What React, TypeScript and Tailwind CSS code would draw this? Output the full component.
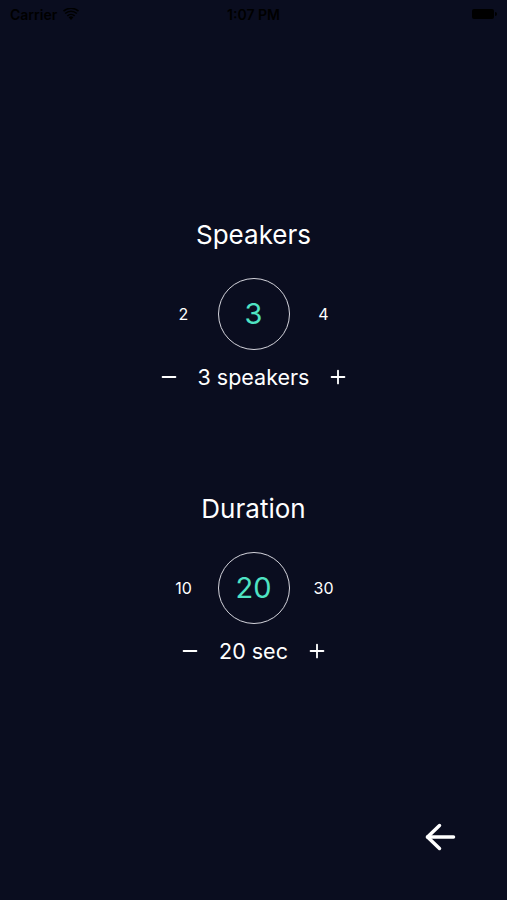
import { Minus, Plus } from 'lucide-react'

const FONT = { fontFamily: 'Inter, "Noto Sans", sans-serif' }

function StatusBar() {
  return (
    <div className="relative flex h-[28px] items-center px-[10px] text-[14px] font-semibold text-black">
      <div className="flex items-center gap-[6px]">
        <span>Carrier</span>
        <svg width="16" height="12" viewBox="0 0 16 12" fill="#000">
          <path d="M8 12 L5.6 9.2 A3.6 3.6 0 0 1 10.4 9.2 Z" />
          <path d="M3.8 7.3 A6.2 6.2 0 0 1 12.2 7.3 L11.1 8.5 A4.6 4.6 0 0 0 4.9 8.5 Z" />
          <path d="M1.6 4.9 A9.4 9.4 0 0 1 14.4 4.9 L13.3 6.1 A7.8 7.8 0 0 0 2.7 6.1 Z" />
          <path d="M0 2.6 A12 12 0 0 1 16 2.6 L15 3.8 A10.4 10.4 0 0 0 1 3.8 Z" />
        </svg>
      </div>
      <span className="absolute left-1/2 -translate-x-1/2">1:07 PM</span>
      <div className="ml-auto flex items-center">
        <div className="h-[10px] w-[22px] rounded-[2px] bg-black" />
        <div className="ml-[1px] h-[4px] w-[2px] rounded-r-sm bg-black" />
      </div>
    </div>
  )
}

function Picker({ title, value, prev, next, label }: { title: string; value: string; prev: string; next: string; label: string }) {
  return (
    <div className="flex flex-col items-center text-white">
      <h2 className="text-[26px] leading-[32px]">{title}</h2>
      <div className="mt-[27px] flex items-center gap-[14px]">
        <span className="w-[40px] text-center text-[16px]">{prev}</span>
        <div className="flex h-[72px] w-[72px] items-center justify-center rounded-full border-[1.5px] border-[#d4d4dc]">
          <span className="text-[29px] text-[#4fe3c3]">{value}</span>
        </div>
        <span className="w-[40px] text-center text-[16px]">{next}</span>
      </div>
      <div className="mt-[13px] flex h-[28px] items-center gap-[18px]">
        <Minus className="h-[22px] w-[22px]" strokeWidth={2} />
        <span className="text-[21.5px] leading-[28px]">{label}</span>
        <Plus className="h-[22px] w-[22px]" strokeWidth={2} />
      </div>
    </div>
  )
}

export default function App() {
  return (
    <div className="flex h-[900px] w-full flex-col bg-[#0a0d1f]" style={FONT}>
      <StatusBar />
      <div className="flex flex-col pt-[191px]">
        <Picker title="Speakers" value="3" prev="2" next="4" label="3 speakers" />
        <div className="mt-[102px]">
          <Picker title="Duration" value="20" prev="10" next="30" label="20 sec" />
        </div>
      </div>
      <div className="mt-auto flex justify-end pb-[48px] pr-[51px]">
        <svg width="32" height="30" viewBox="0 0 32 30" fill="none" stroke="#fff" strokeWidth="3.5" strokeLinecap="round" strokeLinejoin="round">
          <path d="M29.5 15 H3.5" />
          <path d="M15.5 3.5 L3.5 15 L15.5 26.5" />
        </svg>
      </div>
    </div>
  )
}
